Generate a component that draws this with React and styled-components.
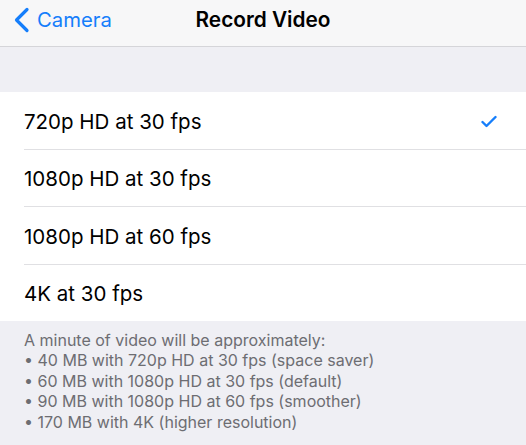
import React from "react";
import styled, { createGlobalStyle } from "styled-components";

const Global = createGlobalStyle`
  html, body { margin: 0; padding: 0; background: #efeff4; }
  body { font-family: Inter, "Liberation Sans", sans-serif; -webkit-font-smoothing: antialiased; }
`;

const Page = styled.div`
  width: 526px;
  height: 445px;
  background: #efeff4;
  overflow: hidden;
  display: flex;
  flex-direction: column;
`;

const NavBar = styled.div`
  height: 46px;
  flex: 0 0 auto;
  background: #f7f7f8;
  border-bottom: 1px solid #d5d5d9;
  display: grid;
  grid-template-columns: 1fr auto 1fr;
  align-items: center;
`;

const BackButton = styled.div`
  display: flex;
  align-items: center;
  gap: 7px;
  padding-left: 13px;
  color: #157efb;
  font-size: 20.3px;
  margin-top: -7px;
`;

const Title = styled.div`
  font-size: 20.8px;
  font-weight: 600;
  color: #000;
  margin-top: -7px;
`;

const Spacer = styled.div`
  height: 45px;
  flex: 0 0 auto;
`;

const List = styled.div`
  background: #fff;
  display: flex;
  flex-direction: column;
`;

const Row = styled.div`
  height: 56.5px;
  display: flex;
  align-items: center;
  justify-content: space-between;
  padding: 2px 29px 0 24px;
  box-sizing: border-box;
  font-size: 20.5px;
  color: #000;
`;

const Separator = styled.div`
  height: 1px;
  margin-left: 24px;
  background: #e0e0e3;
`;

const Footer = styled.div`
  padding: 9px 24px 0;
  font-size: 16px;
  line-height: 20.4px;
  color: #6d6d72;
`;

const Chevron = () => (
  <svg width="17" height="26" viewBox="0 0 17 26">
    <path d="M14 2.5 L3.5 13 L14 23.5" fill="none" stroke="#157efb" strokeWidth="3.2" strokeLinecap="round" strokeLinejoin="round" />
  </svg>
);

const Check = () => (
  <svg width="16" height="13" viewBox="0 0 16 13">
    <path d="M1.5 7 L5.5 11 L14.5 2" fill="none" stroke="#157efb" strokeWidth="2.4" strokeLinecap="round" strokeLinejoin="round" />
  </svg>
);

const options = ["720p HD at 30 fps", "1080p HD at 30 fps", "1080p HD at 60 fps", "4K at 30 fps"];
const notes = [
  "A minute of video will be approximately:",
  "• 40 MB with 720p HD at 30 fps (space saver)",
  "• 60 MB with 1080p HD at 30 fps (default)",
  "• 90 MB with 1080p HD at 60 fps (smoother)",
  "• 170 MB with 4K (higher resolution)",
];

export default function App() {
  return (
    <Page>
      <Global />
      <NavBar>
        <BackButton>
          <Chevron />
          <span>Camera</span>
        </BackButton>
        <Title>Record Video</Title>
        <div />
      </NavBar>
      <Spacer />
      <List>
        {options.map((o, i) => (
          <React.Fragment key={o}>
            <Row>
              <span>{o}</span>
              {i === 0 && <Check />}
            </Row>
            {i < options.length - 1 && <Separator />}
          </React.Fragment>
        ))}
      </List>
      <Footer>
        {notes.map((n) => (
          <div key={n}>{n}</div>
        ))}
      </Footer>
    </Page>
  );
}
